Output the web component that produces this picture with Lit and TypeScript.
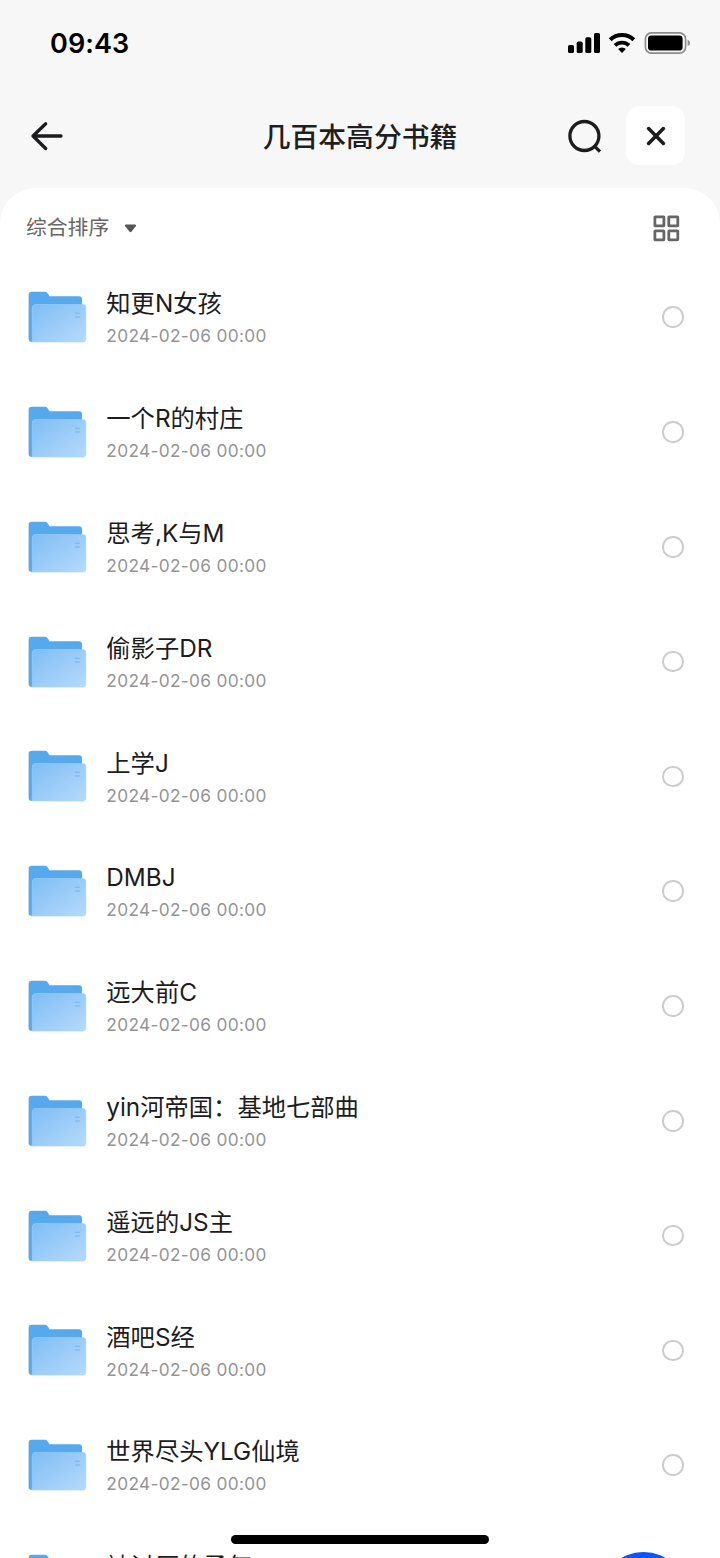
import { LitElement, html, css, svg } from "lit";
import { customElement, property } from "lit/decorators.js";

interface Folder {
  name: string;
  date: string;
}

const DATE = "2024-02-06 00:00";
const FOLDERS: Folder[] = [
  "知更N女孩",
  "一个R的村庄",
  "思考,K与M",
  "偷影子DR",
  "上学J",
  "DMBJ",
  "远大前C",
  "yin河帝国：基地七部曲",
  "遥远的JS主",
  "酒吧S经",
  "世界尽头YLG仙境",
  "被讨厌的勇气",
].map((name) => ({ name, date: DATE }));

@customElement("status-bar")
class StatusBar extends LitElement {
  static styles = css`
    :host {
      display: flex;
      justify-content: space-between;
      height: 84px;
      padding: 0 29px 0 50px;
      box-sizing: border-box;
      color: #000;
    }
    .time {
      font-size: 27px;
      font-weight: 600;
      line-height: 88px;
      letter-spacing: 0.1px;
    }
    svg {
      display: block;
      margin-top: 30px;
    }
  `;
  render() {
    return html`
      <span class="time">09:43</span>
      <svg width="124" height="26" viewBox="567 30 124 26">
        <rect x="568" y="45" width="6" height="8" rx="1.6" />
        <rect x="576.7" y="41.6" width="6" height="11.4" rx="1.6" />
        <rect x="585.3" y="37.2" width="6" height="15.8" rx="1.6" />
        <rect x="594" y="33" width="6" height="20" rx="1.6" />
        <path d="M622 53 l-3.9-3.9 a5.6 5.6 0 0 1 7.8 0z" />
        <path d="M610.2 39.8 a17 17 0 0 1 23.6 0" fill="none" stroke="#000" stroke-width="4" />
        <path d="M615 45.4 a10.1 10.1 0 0 1 14 0" fill="none" stroke="#000" stroke-width="3.8" />
        <rect x="645.4" y="32.9" width="40.2" height="20.2" rx="6" fill="none" stroke="#8c8c8c" stroke-width="1.7" />
        <rect x="648" y="35.4" width="34.6" height="15.2" rx="3.4" />
        <path d="M687.6 39.8 q2.4 1 2.4 3.2 t-2.4 3.2z" fill="#8c8c8c" />
      </svg>
    `;
  }
}

@customElement("title-bar")
class TitleBar extends LitElement {
  static styles = css`
    :host {
      display: grid;
      grid-template-columns: 200px 1fr 200px;
      align-items: center;
      height: 104px;
      padding: 0 35px 1px 30px;
      box-sizing: border-box;
      color: #1f1f1f;
    }
    svg {
      display: block;
      fill: none;
      stroke: #1c1c1e;
      stroke-width: 3.3;
      stroke-linecap: round;
      stroke-linejoin: round;
    }
    .title {
      margin: 3px 0 0 5px;
      text-align: center;
      font-size: 27.8px;
      line-height: 40px;
      font-weight: 500;
      white-space: nowrap;
    }
    .actions {
      display: flex;
      justify-content: flex-end;
      align-items: center;
      gap: 22px;
    }
    .close {
      display: grid;
      place-items: center;
      width: 59px;
      height: 59px;
      border-radius: 13px;
      background: #fff;
    }
  `;
  render() {
    return html`
      <svg width="34" height="30" viewBox="0 0 34 30">
        <path d="M31 15H3M15.7 2.8L3 15l12.7 12.5" />
      </svg>
      <h1 class="title">几百本高分书籍</h1>
      <div class="actions">
        <svg width="36" height="36" viewBox="0 0 36 36">
          <circle cx="16.4" cy="18" r="14.5" />
          <path d="M27.2 28.8l4.8 4.8" stroke-linecap="butt" />
        </svg>
        <span class="close">
          <svg width="20" height="20" viewBox="0 0 20 20">
            <path d="M2.6 2.6l14.8 14.8M17.4 2.6l-14.8 14.8" stroke-width="3.6" />
          </svg>
        </span>
      </div>
    `;
  }
}

@customElement("folder-row")
class FolderRow extends LitElement {
  @property({ attribute: false }) folder!: Folder;

  static styles = css`
    :host {
      display: flex;
      align-items: center;
      height: 114.8px;
      padding: 0 36px 0 28px;
      box-sizing: border-box;
    }
    .icon {
      display: block;
      flex: none;
      margin-right: 19.3px;
    }
    .text {
      flex: 1;
      padding-top: 1.6px;
      white-space: nowrap;
    }
    .name {
      font-size: 24.3px;
      line-height: 36px;
      color: #1c1c1e;
    }
    .date {
      margin-top: 1px;
      font-size: 17.3px;
      line-height: 28px;
      letter-spacing: 0.32px;
      color: #949494;
    }
    .check {
      width: 21.6px;
      height: 21.6px;
      border: 2px solid #ccc;
      border-radius: 50%;
      box-sizing: border-box;
    }
  `;
  render() {
    return html`
      <svg class="icon" width="59" height="52" viewBox="0 0 59 52">
        <defs>
          <linearGradient id="front" x1="0" y1="0" x2="1" y2="1">
            <stop offset="0" stop-color="#7fbdf4" />
            <stop offset="1" stop-color="#b6dafc" />
          </linearGradient>
        </defs>
        <path
          d="M0.6 4 Q0.6 0.8 3.8 0.8 H17 Q19 0.8 20.3 3.2 L21.5 5.2 H51 Q54 5.2 54 8.2 V51 H4 Q0.6 51 0.6 48z"
          fill="#57a9ee"
        />
        <path
          d="M4.3 17 Q4.3 13.5 7.8 13.5 H54.8 Q57.8 13.5 57.8 16.5 V48 Q57.8 51 54.8 51 H3.8 Q4.3 50 4.3 48z"
          fill="url(#front)"
          stroke="#a3d0f9"
          stroke-width="0.6"
        />
        <path d="M47 22.3h4.8M47 26h4.8" stroke="#72b4ef" stroke-width="1.1" />
      </svg>
      <div class="text">
        <div class="name">${this.folder.name}</div>
        <div class="date">${this.folder.date}</div>
      </div>
      <span class="check"></span>
    `;
  }
}

@customElement("app-root")
class AppRoot extends LitElement {
  static styles = css`
    :host {
      display: block;
      position: relative;
      height: 1558px;
      overflow: hidden;
      background: #f7f7f7;
      font-family: Inter, "Noto Sans CJK SC", sans-serif;
    }
    .sheet {
      height: 1370px;
      overflow: hidden;
      border-radius: 36px 36px 0 0;
      background: #fff;
    }
    .toolbar {
      display: flex;
      align-items: center;
      height: 71.8px;
      padding: 8px 40.5px 0 26px;
      box-sizing: border-box;
      color: #666;
    }
    .sort {
      padding-top: 1px;
      font-size: 20.8px;
      line-height: 30px;
    }
    .caret {
      margin: 1px 0 0 15px;
    }
    .grid {
      margin: 1px 0 0 auto;
    }
    .home {
      position: absolute;
      left: 231px;
      bottom: 14px;
      width: 258px;
      height: 9px;
      border-radius: 5px;
      background: #000;
    }
    .fab {
      position: absolute;
      left: 600px;
      top: 1552px;
      width: 87px;
      height: 87px;
      border-radius: 50%;
      background: #0b57f5;
    }
  `;
  render() {
    return html`
      <status-bar></status-bar>
      <title-bar></title-bar>
      <main class="sheet">
        <div class="toolbar">
          <span class="sort">综合排序</span>
          <svg class="caret" width="13" height="9" viewBox="0 0 13 9">
            <path d="M2 .5h9q1.6 0 1 1.5L7.6 7.6q-1.1 1.2-2.2 0L1 2Q.4.5 2 .5z" fill="#555" />
          </svg>
          <svg class="grid" width="27" height="27" viewBox="0 0 27 27">
            ${[1.9, 15.8].map((y) =>
              [1.9, 15.8].map(
                (x) => svg`<rect x=${x} y=${y} width="9" height="9" rx=".4" fill="none" stroke="#666" stroke-width="2.8" />`
              )
            )}
          </svg>
        </div>
        ${FOLDERS.map((f) => html`<folder-row .folder=${f}></folder-row>`)}
      </main>
      <div class="fab"></div>
      <div class="home"></div>
    `;
  }
}
